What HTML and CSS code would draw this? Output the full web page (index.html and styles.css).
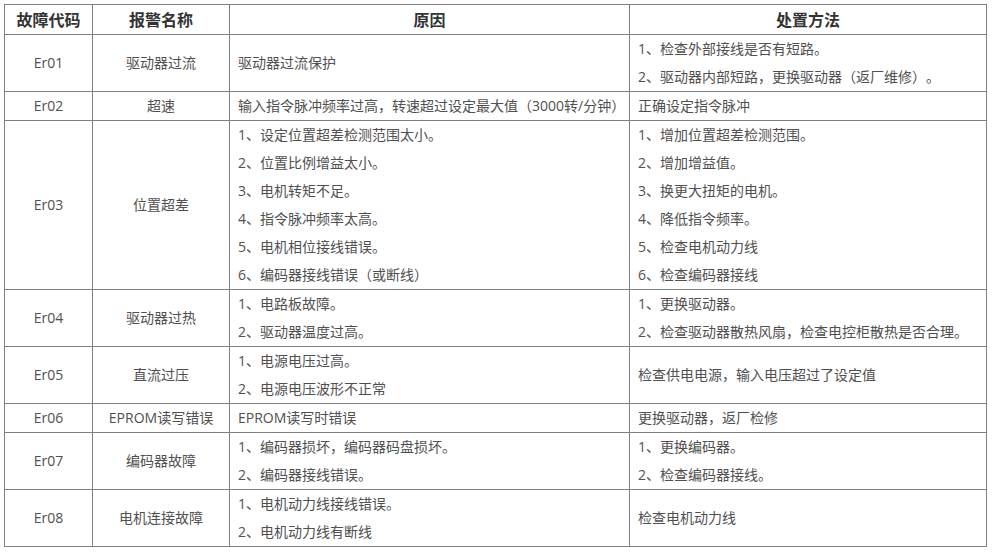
FILE: index.html
```html
<!DOCTYPE html>
<html lang="zh-CN">
<head>
<meta charset="utf-8">
<title>故障代码</title>
<link rel="stylesheet" href="styles.css">
</head>
<body>
<div class="wrap">
<table class="fault-table">
  <colgroup>
    <col class="c-code">
    <col class="c-name">
    <col class="c-cause">
    <col class="c-fix">
  </colgroup>
  <thead>
    <tr>
      <th>故障代码</th>
      <th>报警名称</th>
      <th>原因</th>
      <th>处置方法</th>
    </tr>
  </thead>
  <tbody>
    <tr>
      <td class="center">Er01</td>
      <td class="center">驱动器过流</td>
      <td><div class="ln">驱动器过流保护</div></td>
      <td><div class="ln">1、检查外部接线是否有短路。</div><div class="ln">2、驱动器内部短路，更换驱动器（返厂维修）。</div></td>
    </tr>
    <tr>
      <td class="center">Er02</td>
      <td class="center">超速</td>
      <td><div class="ln">输入指令脉冲频率过高，转速超过设定最大值（3000转/分钟）</div></td>
      <td><div class="ln">正确设定指令脉冲</div></td>
    </tr>
    <tr>
      <td class="center">Er03</td>
      <td class="center">位置超差</td>
      <td>
        <div class="ln">1、设定位置超差检测范围太小。</div>
        <div class="ln">2、位置比例增益太小。</div>
        <div class="ln">3、电机转矩不足。</div>
        <div class="ln">4、指令脉冲频率太高。</div>
        <div class="ln">5、电机相位接线错误。</div>
        <div class="ln">6、编码器接线错误（或断线）</div>
      </td>
      <td>
        <div class="ln">1、增加位置超差检测范围。</div>
        <div class="ln">2、增加增益值。</div>
        <div class="ln">3、换更大扭矩的电机。</div>
        <div class="ln">4、降低指令频率。</div>
        <div class="ln">5、检查电机动力线</div>
        <div class="ln">6、检查编码器接线</div>
      </td>
    </tr>
    <tr>
      <td class="center">Er04</td>
      <td class="center">驱动器过热</td>
      <td><div class="ln">1、电路板故障。</div><div class="ln">2、驱动器温度过高。</div></td>
      <td><div class="ln">1、更换驱动器。</div><div class="ln">2、检查驱动器散热风扇，检查电控柜散热是否合理。</div></td>
    </tr>
    <tr>
      <td class="center">Er05</td>
      <td class="center">直流过压</td>
      <td><div class="ln">1、电源电压过高。</div><div class="ln">2、电源电压波形不正常</div></td>
      <td><div class="ln">检查供电电源，输入电压超过了设定值</div></td>
    </tr>
    <tr>
      <td class="center">Er06</td>
      <td class="center">EPROM读写错误</td>
      <td><div class="ln">EPROM读写时错误</div></td>
      <td><div class="ln">更换驱动器，返厂检修</div></td>
    </tr>
    <tr>
      <td class="center">Er07</td>
      <td class="center">编码器故障</td>
      <td><div class="ln">1、编码器损坏，编码器码盘损坏。</div><div class="ln">2、编码器接线错误。</div></td>
      <td><div class="ln">1、更换编码器。</div><div class="ln">2、检查编码器接线。</div></td>
    </tr>
    <tr>
      <td class="center">Er08</td>
      <td class="center">电机连接故障</td>
      <td><div class="ln">1、电机动力线接线错误。</div><div class="ln">2、电机动力线有断线</div></td>
      <td><div class="ln">检查电机动力线</div></td>
    </tr>
  </tbody>
</table>
</div>
</body>
</html>
```
FILE: styles.css
```css
html, body {
  margin: 0;
  padding: 0;
  background: #ffffff;
}

.wrap {
  padding: 4px 0 0 4px;
}

.fault-table {
  border-collapse: collapse;
  table-layout: fixed;
  width: 983px;
  font-family: "Open Sans", "Noto Sans CJK SC", sans-serif;
  font-size: 14px;
  color: #505050;
  text-spacing-trim: space-all;
}

.c-code { width: 88px; }
.c-name { width: 137px; }
.c-cause { width: 400px; }
.c-fix { width: 357px; }

.fault-table th,
.fault-table td {
  border: 1px solid #808080;
  padding: 0 8px;
  vertical-align: middle;
  white-space: nowrap;
}

.fault-table th {
  font-family: "Noto Sans CJK SC", sans-serif;
  font-size: 16px;
  font-weight: bold;
  color: #333333;
  line-height: 29px;
  text-align: center;
}

.fault-table td {
  line-height: 28px;
  text-align: left;
}

.fault-table td.center {
  text-align: center;
  padding: 0 2px;
}

.ln {
  height: 28px;
}
```
